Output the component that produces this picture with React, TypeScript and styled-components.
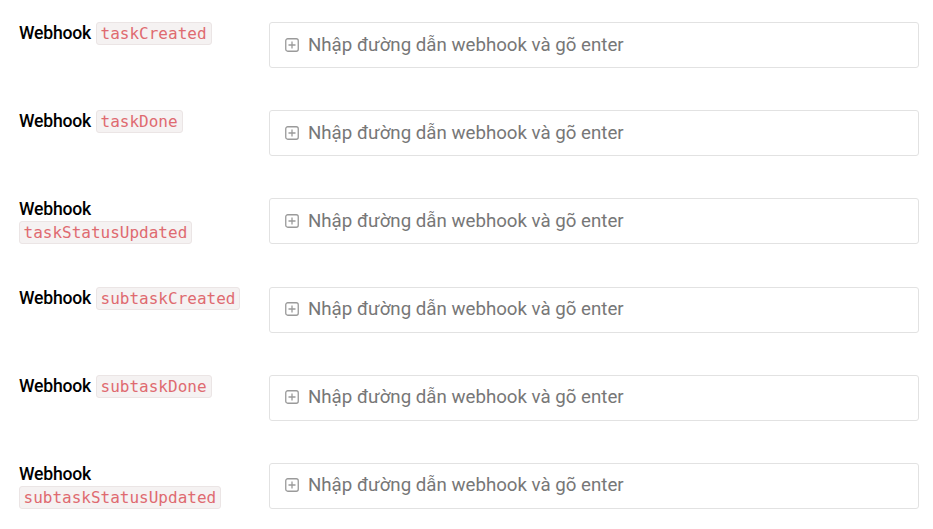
import React, { FC } from 'react'
import styled, { createGlobalStyle } from 'styled-components'

const GlobalStyle = createGlobalStyle`
	body {
		margin: 0;
		background: #ffffff;
		font-family: Roboto, 'Noto Sans', sans-serif;
	}
`

const Page = styled.div`
	padding: 22px 14px 0 19px;
	display: flex;
	flex-direction: column;
	gap: 42.2px;
`

const Row = styled.div`
	display: flex;
	align-items: flex-start;
`

const Label = styled.div`
	width: 250px;
	flex: none;
	font-size: 17.6px;
	font-weight: 500;
	line-height: 23px;
	color: #000;
	letter-spacing: -0.2px;
`

const Code = styled.code<{ $block?: boolean }>`
	display: inline-block;
	margin-left: ${(p) => (p.$block ? '0' : '5px')};
	padding: 0 4px 0 3.5px;
	height: 23px;
	box-sizing: border-box;
	line-height: 21px;
	font-family: 'DejaVu Sans Mono', monospace;
	font-weight: 400;
	font-size: 16px;
	letter-spacing: 0;
	color: #df6a70;
	background: #f5f2f2;
	border: 1px solid #ebe5e5;
	border-radius: 3px;
	vertical-align: top;
`

const Field = styled.div`
	flex: 1;
	height: 46px;
	box-sizing: border-box;
	border: 1px solid #e2e2e2;
	border-radius: 3px;
	display: flex;
	align-items: center;
	padding-left: 15px;
	padding-bottom: 1px;
	gap: 9px;
	color: #777;
	font-size: 18.7px;
`

const PlusSquare: FC = () => (
	<svg width='14' height='14' viewBox='0 0 14 14' fill='none'>
		<rect x='0.75' y='0.75' width='12.5' height='12.5' rx='2' stroke='#9a9a9a' strokeWidth='1.3' />
		<path d='M7 3.5v7M3.5 7h7' stroke='#9a9a9a' strokeWidth='1.3' />
	</svg>
)

const hooks: { name: string; wrap: boolean }[] = [
	{ name: 'taskCreated', wrap: false },
	{ name: 'taskDone', wrap: false },
	{ name: 'taskStatusUpdated', wrap: true },
	{ name: 'subtaskCreated', wrap: false },
	{ name: 'subtaskDone', wrap: false },
	{ name: 'subtaskStatusUpdated', wrap: true },
]

const App: FC = () => (
	<>
		<GlobalStyle />
		<Page>
			{hooks.map((h) => (
				<Row key={h.name}>
					<Label>
						Webhook
						{h.wrap ? <br /> : null}
						<Code $block={h.wrap}>{h.name}</Code>
					</Label>
					<Field>
						<PlusSquare />
						<span>Nhập đường dẫn webhook và gõ enter</span>
					</Field>
				</Row>
			))}
		</Page>
	</>
)

export default App
